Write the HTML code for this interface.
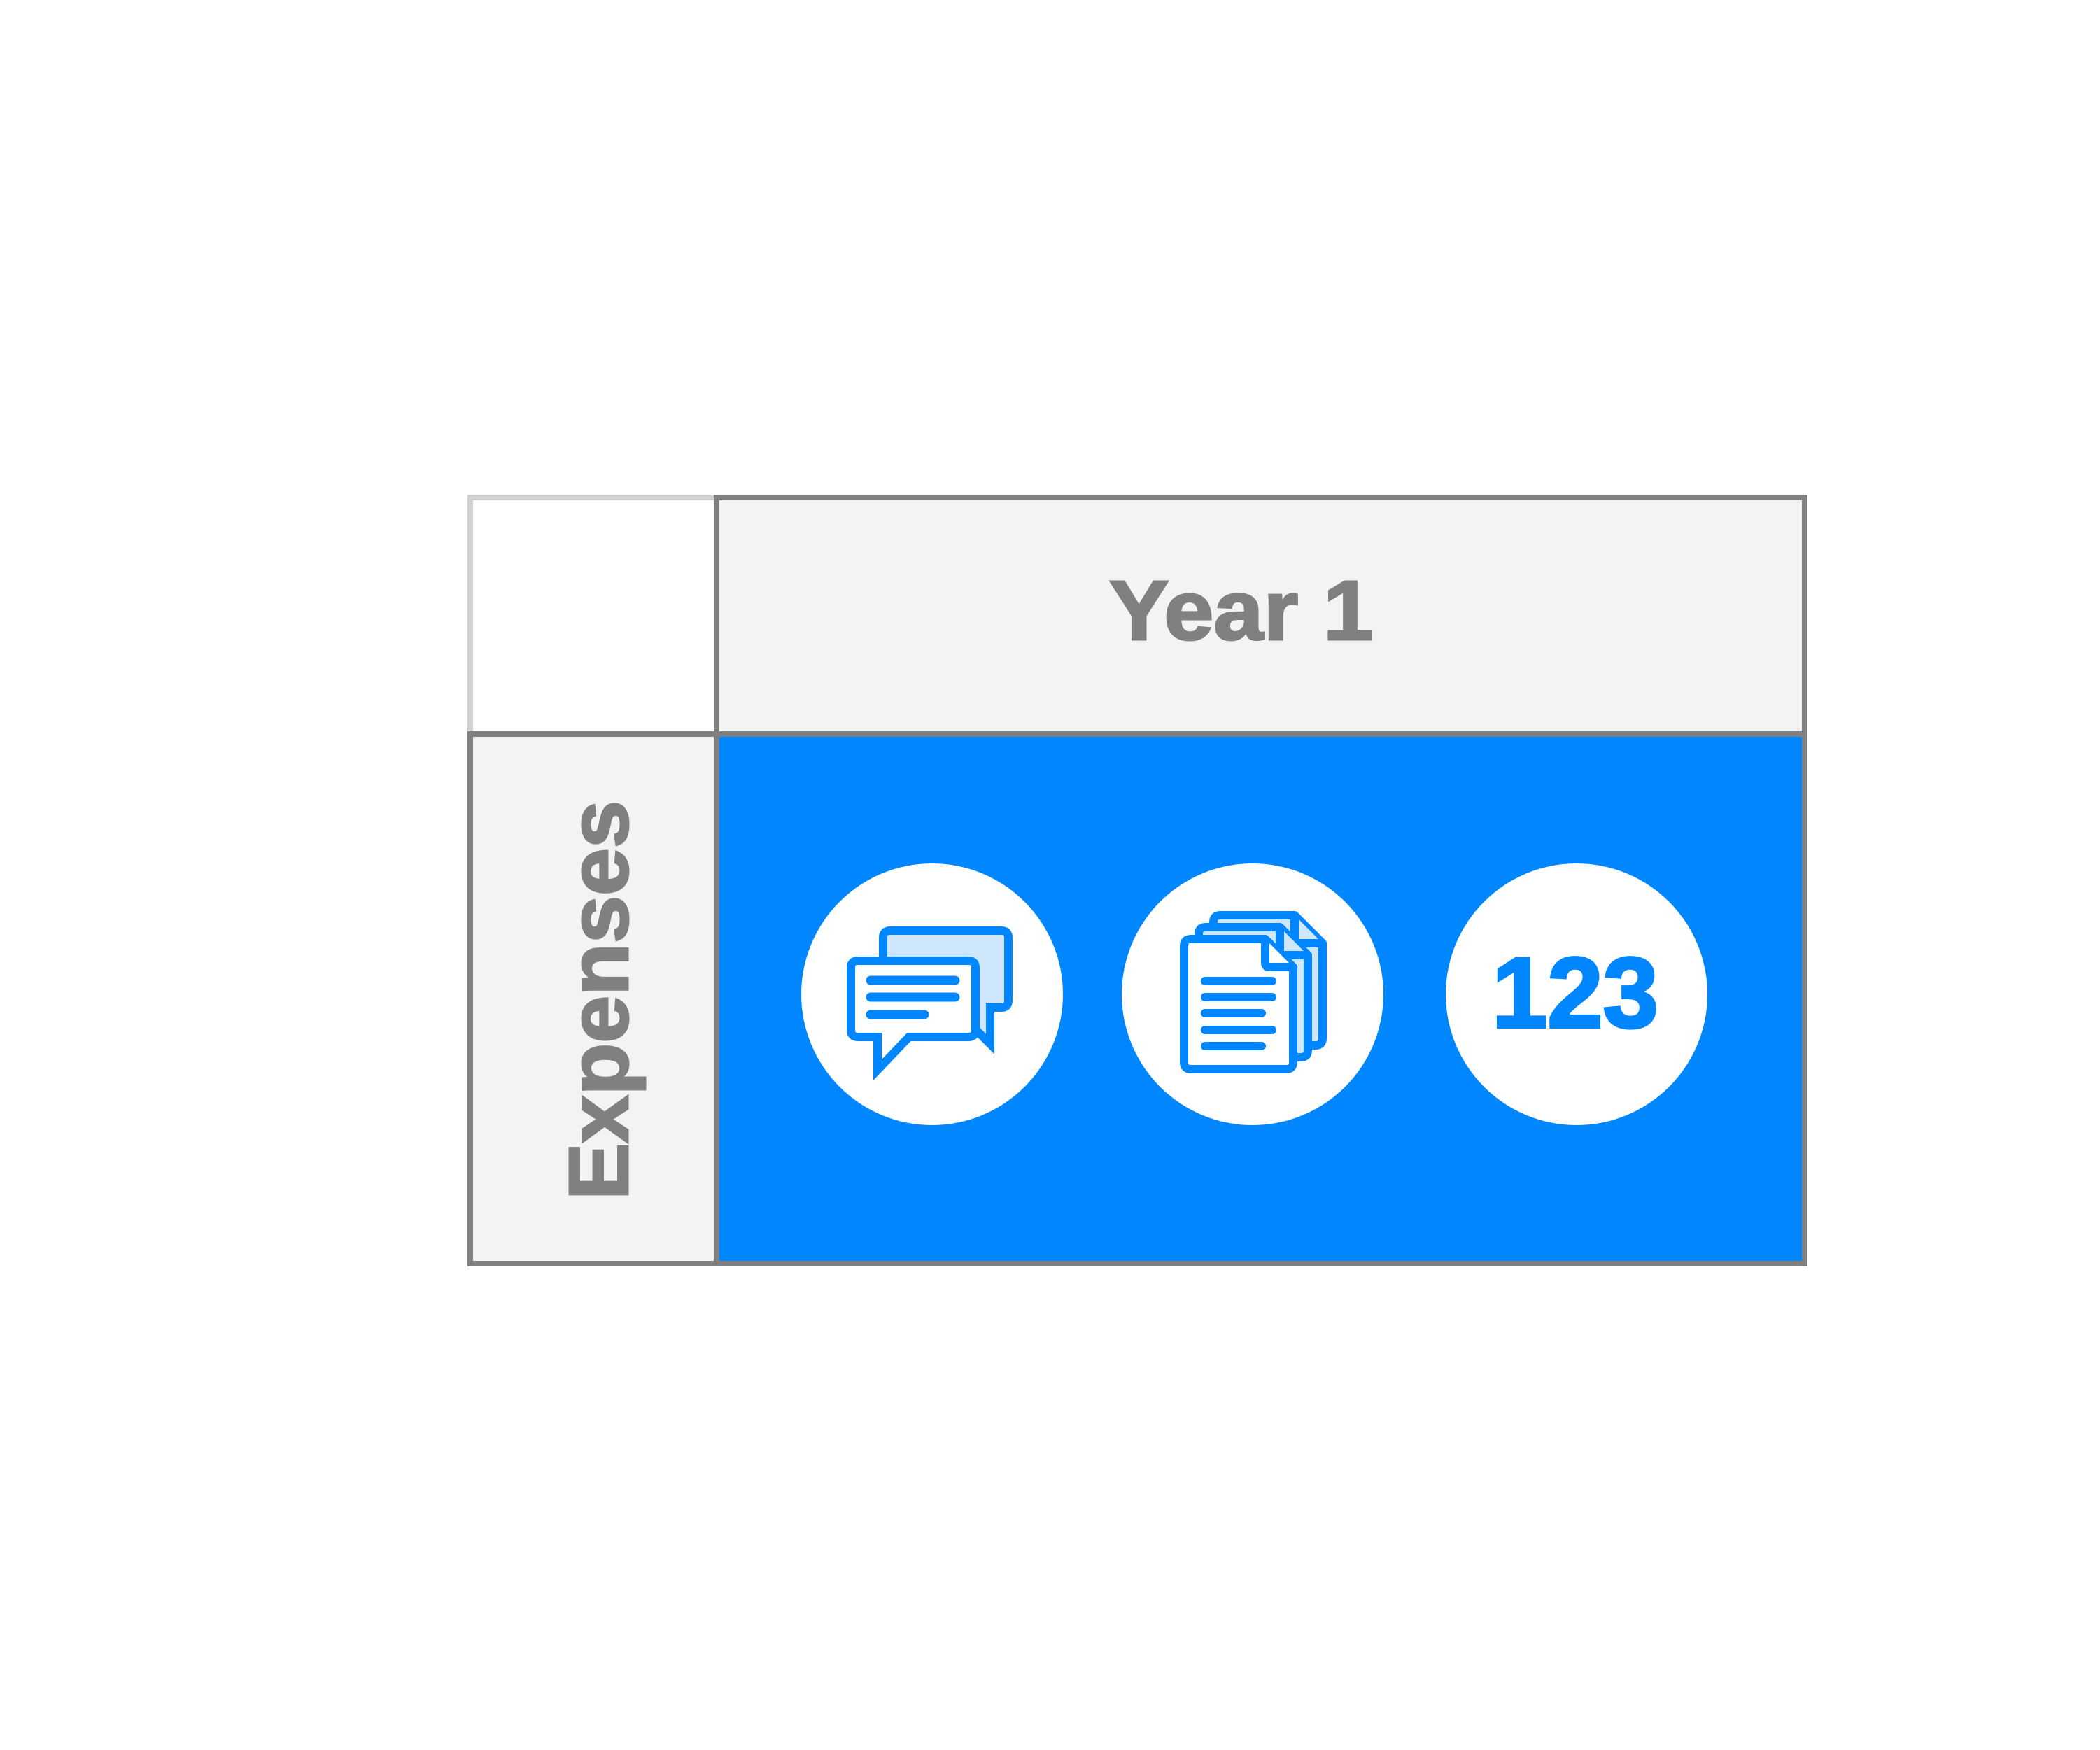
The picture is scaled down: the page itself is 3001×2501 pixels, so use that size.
<!DOCTYPE html>
<html><head><meta charset="utf-8"><style>
html,body{margin:0;padding:0;background:#fff;}
svg{display:block;}
</style></head><body>
<svg width="3001" height="2501" viewBox="0 0 3001 2501" xmlns="http://www.w3.org/2000/svg">
<rect width="3001" height="2501" fill="#fff"/>
<rect x="672" y="711" width="352" height="338" fill="#fff" stroke="#d0d0d0" stroke-width="8"/>
<rect x="1024" y="711" width="1555" height="338" fill="#f3f3f3" stroke="#808080" stroke-width="8"/>
<rect x="672" y="1049" width="352" height="757" fill="#f3f3f3" stroke="#808080" stroke-width="8"/>
<rect x="1024" y="1049" width="1555" height="757" fill="#0086ff" stroke="#808080" stroke-width="8"/>

<text x="1585" y="914" font-family="Liberation Sans, sans-serif" font-weight="bold" font-size="121" fill="#808080" stroke="#808080" stroke-width="3" textLength="377" lengthAdjust="spacingAndGlyphs">Year 1</text>
<text transform="translate(897,1715) rotate(-90)" x="0" y="0" font-family="Liberation Sans, sans-serif" font-weight="bold" font-size="121" fill="#808080" stroke="#808080" stroke-width="3" textLength="571" lengthAdjust="spacingAndGlyphs">Expenses</text>

<circle cx="1332" cy="1421" r="187" fill="#fff"/>
<circle cx="1790" cy="1421" r="187" fill="#fff"/>
<circle cx="2253" cy="1421" r="187" fill="#fff"/>

<text x="2132" y="1468" font-family="Liberation Sans, sans-serif" font-weight="bold" font-size="143" fill="#0086ff" stroke="#0086ff" stroke-width="4" textLength="238" lengthAdjust="spacingAndGlyphs">123</text>

<g fill="none" stroke="#0086ff" stroke-width="12" stroke-linejoin="miter">
<path d="M1262,1340 Q1262 1330 1272 1330 H1431 Q1441 1330 1441 1340 V1430 Q1441 1440 1431 1440 H1415 V1492 L1385 1462 V1440 H1262 Z" fill="#cfe7fd"/>
<path d="M1226,1373 H1384 Q1394 1373 1394 1383 V1472 Q1394 1482 1384 1482 H1299 L1254 1529 V1482 H1226 Q1216 1482 1216 1472 V1383 Q1216 1373 1226 1373 Z" fill="#fff"/>
</g>
<g stroke="#0086ff" stroke-width="13" stroke-linecap="round">
<line x1="1244" y1="1401" x2="1365" y2="1401"/>
<line x1="1244" y1="1425" x2="1365" y2="1425"/>
<line x1="1244" y1="1450" x2="1321" y2="1450"/>
</g>

<g fill="none" stroke="#0086ff" stroke-width="12" stroke-linejoin="round">
<g transform="translate(42,-34)">
<path d="M1702,1342 H1808 L1848,1382 V1518 Q1848 1528 1838 1528 H1702 Q1692 1528 1692 1518 V1352 Q1692 1342 1702 1342 Z" fill="#cfe7fd"/>
<path d="M1808,1342 V1376 Q1808 1382 1814 1382 H1848" fill="#cfe7fd"/>
</g>
<g transform="translate(21,-17)">
<path d="M1702,1342 H1808 L1848,1382 V1518 Q1848 1528 1838 1528 H1702 Q1692 1528 1692 1518 V1352 Q1692 1342 1702 1342 Z" fill="#cfe7fd"/>
<path d="M1808,1342 V1376 Q1808 1382 1814 1382 H1848" fill="#cfe7fd"/>
</g>
<path d="M1702,1342 H1808 L1848,1382 V1518 Q1848 1528 1838 1528 H1702 Q1692 1528 1692 1518 V1352 Q1692 1342 1702 1342 Z" fill="#fff"/>
<path d="M1808,1342 V1376 Q1808 1382 1814 1382 H1848" fill="#fff"/>
</g>
<g stroke="#0086ff" stroke-width="12" stroke-linecap="round">
<line x1="1722" y1="1402" x2="1818" y2="1402"/>
<line x1="1722" y1="1425" x2="1818" y2="1425"/>
<line x1="1722" y1="1448" x2="1803" y2="1448"/>
<line x1="1722" y1="1472" x2="1818" y2="1472"/>
<line x1="1722" y1="1495" x2="1803" y2="1495"/>
</g>
</svg>
</body></html>
